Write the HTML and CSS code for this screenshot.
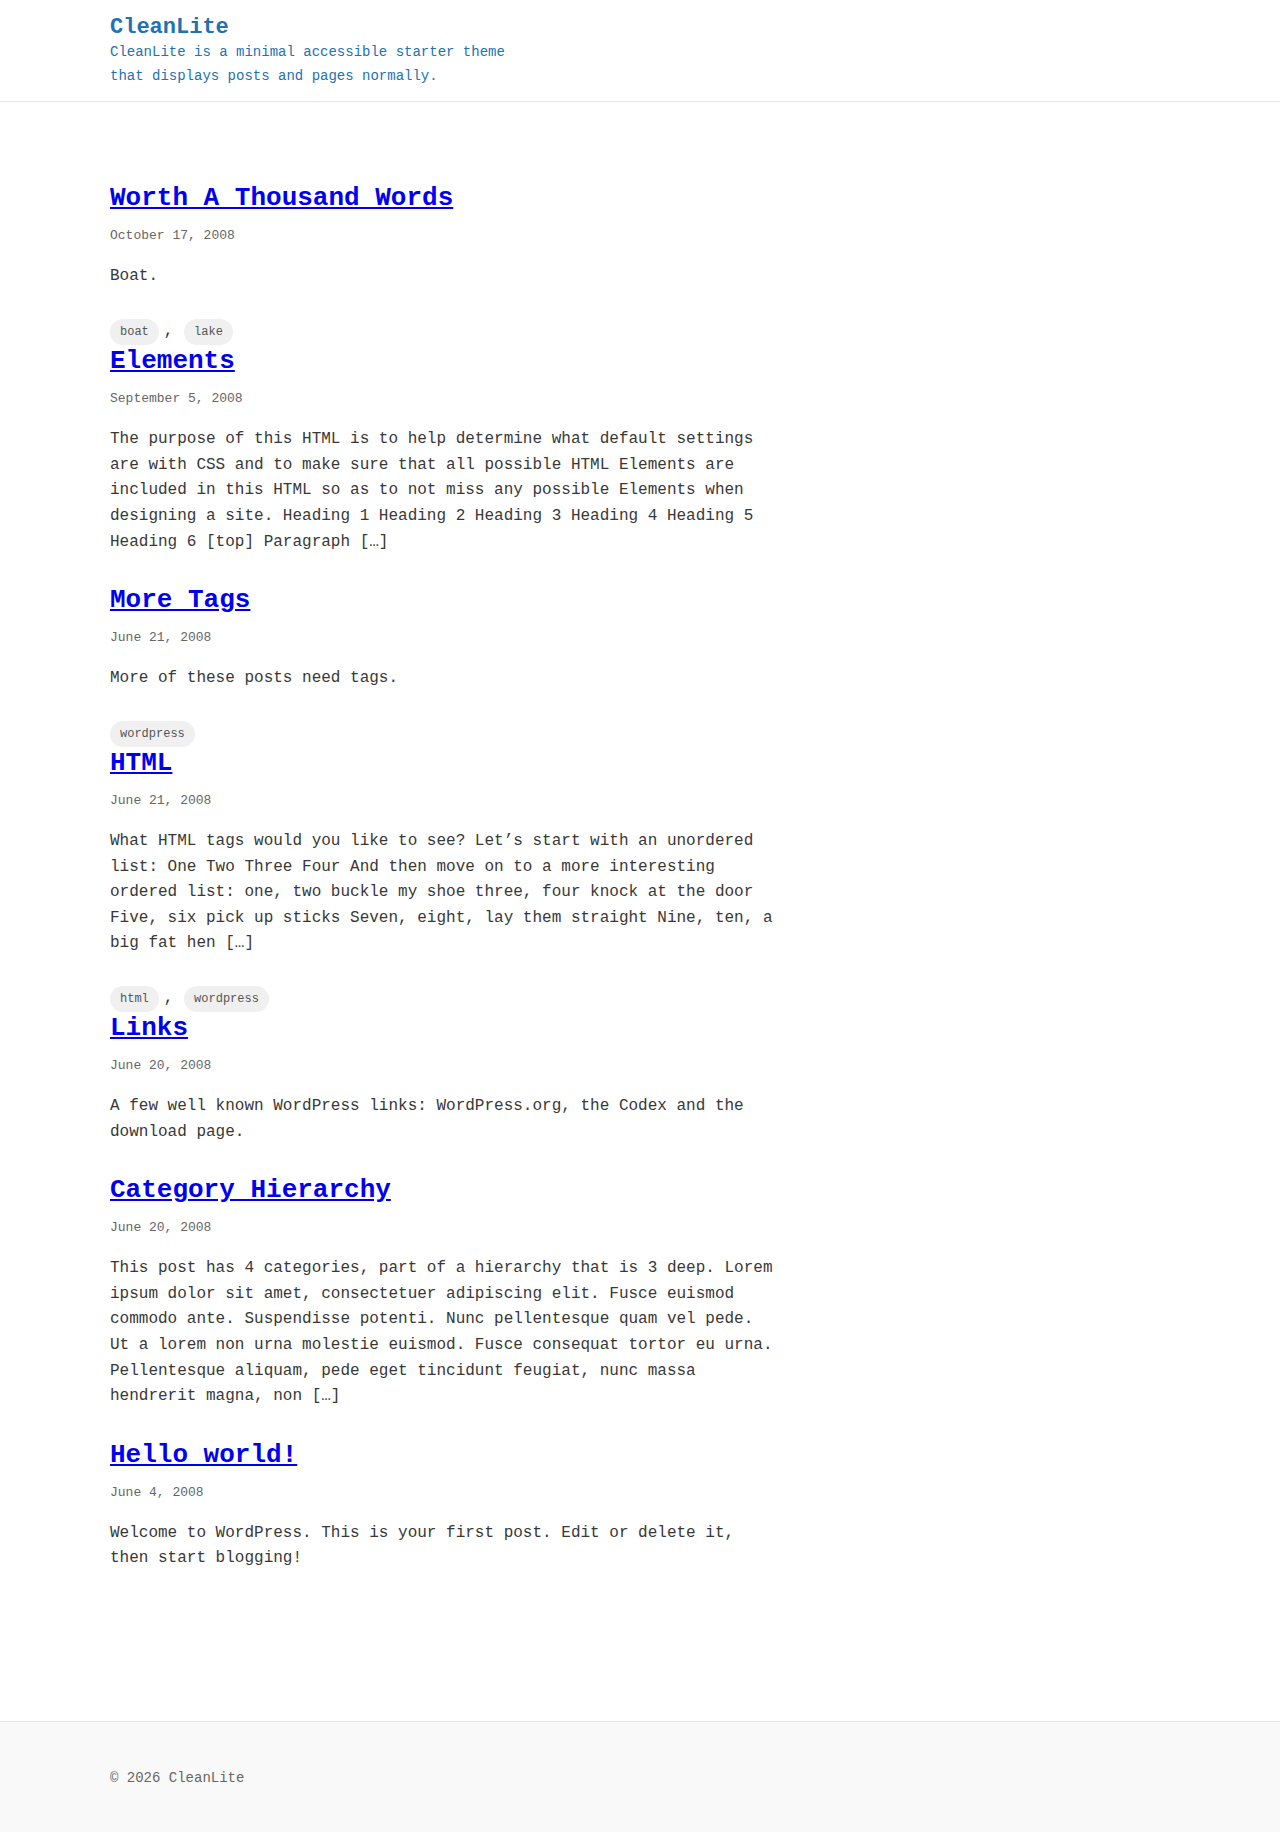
FILE: index.html
```html
<!DOCTYPE html>
<html lang="en">
<head>
<meta charset="utf-8">
<title>CleanLite</title>
<link rel="stylesheet" href="styles.css">
</head>
<body>
<header class="site-header">
  <div class="wrap">
    <a class="site-title" href="#">CleanLite</a>
    <p class="site-desc">CleanLite is a minimal accessible starter theme<br>that displays posts and pages normally.</p>
  </div>
</header>
<main class="site-main">
  <div class="wrap">
    <article class="post">
      <h2 class="post-title"><a href="#">Worth A Thousand Words</a></h2>
      <div class="post-date">October 17, 2008</div>
      <div class="post-excerpt"><p>Boat.</p></div>
      <div class="tags"><a class="tag" href="#">boat</a><span class="sep">,</span><a class="tag" href="#">lake</a></div>
    </article>
    <article class="post">
      <h2 class="post-title"><a href="#">Elements</a></h2>
      <div class="post-date">September 5, 2008</div>
      <div class="post-excerpt"><p>The purpose of this HTML is to help determine what default settings are with CSS and to make sure that all possible HTML Elements are included in this HTML so as to not miss any possible Elements when designing a site. Heading 1 Heading 2 Heading 3 Heading 4 Heading 5 Heading 6 [top] Paragraph […]</p></div>
    </article>
    <article class="post">
      <h2 class="post-title"><a href="#">More Tags</a></h2>
      <div class="post-date">June 21, 2008</div>
      <div class="post-excerpt"><p>More of these posts need tags.</p></div>
      <div class="tags"><a class="tag" href="#">wordpress</a></div>
    </article>
    <article class="post">
      <h2 class="post-title"><a href="#">HTML</a></h2>
      <div class="post-date">June 21, 2008</div>
      <div class="post-excerpt"><p>What HTML tags would you like to see? Let’s start with an unordered list: One Two Three Four And then move on to a more interesting ordered list: one, two buckle my shoe three, four knock at the door Five, six pick up sticks Seven, eight, lay them straight Nine, ten, a big fat hen […]</p></div>
      <div class="tags"><a class="tag" href="#">html</a><span class="sep">,</span><a class="tag" href="#">wordpress</a></div>
    </article>
    <article class="post">
      <h2 class="post-title"><a href="#">Links</a></h2>
      <div class="post-date">June 20, 2008</div>
      <div class="post-excerpt"><p>A few well known WordPress links: WordPress.org, the Codex and the download page.</p></div>
    </article>
    <article class="post">
      <h2 class="post-title"><a href="#">Category Hierarchy</a></h2>
      <div class="post-date">June 20, 2008</div>
      <div class="post-excerpt"><p>This post has 4 categories, part of a hierarchy that is 3 deep. Lorem ipsum dolor sit amet, consectetuer adipiscing elit. Fusce euismod commodo ante. Suspendisse potenti. Nunc pellentesque quam vel pede. Ut a lorem non urna molestie euismod. Fusce consequat tortor eu urna. Pellentesque aliquam, pede eget tincidunt feugiat, nunc massa hendrerit magna, non […]</p></div>
    </article>
    <article class="post">
      <h2 class="post-title"><a href="#">Hello world!</a></h2>
      <div class="post-date">June 4, 2008</div>
      <div class="post-excerpt"><p>Welcome to WordPress. This is your first post. Edit or delete it, then start blogging!</p></div>
    </article>
  </div>
</main>
<footer class="site-footer">
  <div class="wrap">
    <p class="copyright">© 2026 CleanLite</p>
  </div>
</footer>
</body>
</html>
```

FILE: styles.css
```css
html, body {
  margin: 0;
  padding: 0;
}
body {
  font-family: "Liberation Mono", "Courier New", monospace;
  font-size: 16px;
  line-height: 1.6;
  color: #383838;
  background: #fff;
}
.wrap {
  max-width: 1060px;
  margin: 0 auto;
}
.site-header {
  padding: 15px 0 13px;
  border-bottom: 1px solid #e6e6e6;
}
.site-title {
  display: block;
  font-size: 22px;
  line-height: 1.2;
  font-weight: 700;
  color: #2271b1;
  text-decoration: none;
}
.site-desc {
  margin: 0;
  font-size: 14px;
  line-height: 23.5px;
  color: #2271b1;
}
.site-main {
  padding: 80px 0 120px;
}
.post {
  max-width: 666px;
}
.post-title {
  margin: 0 0 11.5px;
  font-size: 26px;
  line-height: 1.25;
  font-weight: 700;
}
.post-title a {
  color: #0000ee;
  text-decoration: underline;
}
.post-date {
  font-size: 13px;
  line-height: 1.6;
  color: #666;
  margin-bottom: 17px;
}
.post-excerpt {
  margin-bottom: 29px;
}
.post-excerpt p {
  margin: 0;
}
.tags {
  display: flex;
  align-items: baseline;
}
.tag {
  display: inline-block;
  padding: 4px 10px;
  font-size: 12px;
  line-height: 1.55;
  color: #555;
  background: #f0f0f0;
  border-radius: 999px;
  text-decoration: none;
}
.sep {
  margin: 0 10.7px 0 5px;
  color: #333;
}
.site-footer {
  border-top: 1px solid #e6e6e6;
  background: #f9f9f9;
  padding: 45px 0 44px;
}
.copyright {
  margin: 0;
  font-size: 14px;
  line-height: 1.6;
  color: #666;
}
```
